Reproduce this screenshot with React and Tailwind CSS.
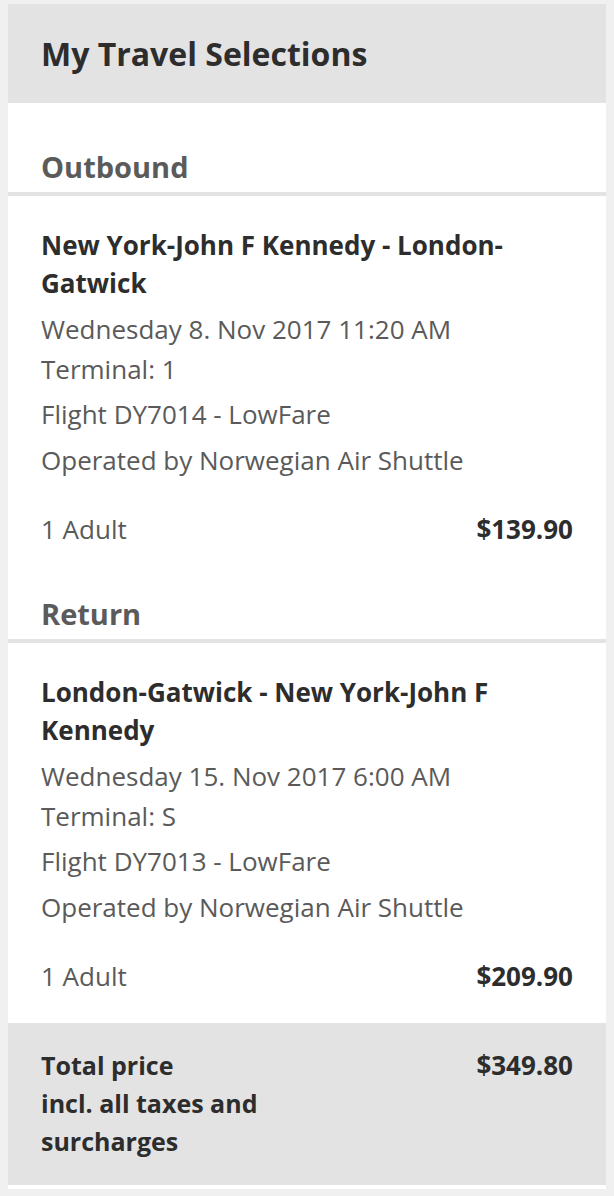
import React from 'react'

const trips = [
    {
        label: 'Outbound',
        route: 'New York-John F Kennedy - London-Gatwick',
        date: 'Wednesday 8. Nov 2017 11:20 AM',
        terminal: 'Terminal: 1',
        flight: 'Flight DY7014 - LowFare',
        price: '$139.90',
    },
    {
        label: 'Return',
        route: 'London-Gatwick - New York-John F Kennedy',
        date: 'Wednesday 15. Nov 2017 6:00 AM',
        terminal: 'Terminal: S',
        flight: 'Flight DY7013 - LowFare',
        price: '$209.90',
    },
]

const TripBlock = ({ trip, first }) => {
    return (
        <div>
            <h3 className={`${first ? 'pt-[47px]' : 'pt-[21px]'} pb-[8px] px-[33px] text-[29px] font-bold leading-[34px] text-[#5b5b5b]`}>
                {trip.label}
            </h3>
            <div className="border-t-4 border-[#e3e3e3] px-[33px] pt-[30px] pb-[27px]">
                <h4 className="text-[26px] font-bold leading-[38px] text-[#2d2d2d]">
                    {trip.route}
                </h4>
                <p className="mt-[7px] text-[26px] leading-[40px] text-[#5a5a5a]">
                    {trip.date}
                    <br />
                    {trip.terminal}
                </p>
                <p className="mt-[5px] text-[26px] leading-[40px] text-[#5a5a5a]">{trip.flight}</p>
                <p className="mt-[6px] text-[26px] leading-[40px] text-[#5a5a5a]">Operated by Norwegian Air Shuttle</p>
                <div className="mt-[29px] flex items-center justify-between text-[26px] leading-[40px]">
                    <span className="text-[#5a5a5a]">1 Adult</span>
                    <span className="font-bold text-[#2d2d2d]">{trip.price}</span>
                </div>
            </div>
        </div>
    )
}

export default function App() {
    return (
        <div className="min-h-[1196px] bg-[#f0f0f0] px-[8px] pt-[4px] font-['Open_Sans',sans-serif]">
            <div className="bg-white">
                <div className="flex h-[99px] items-center bg-[#e3e3e3] px-[33px]">
                    <h2 className="text-[32px] font-bold text-[#2d2d2d]">My Travel Selections</h2>
                </div>
                {trips.map((trip, index) => (
                    <TripBlock key={index} trip={trip} first={index === 0} />
                ))}
                <div className="flex justify-between bg-[#e3e3e3] px-[33px] pt-[23px] pb-[25px] text-[25px] font-bold leading-[38px] text-[#2d2d2d]">
                    <div>
                        Total price
                        <br />
                        incl. all taxes and
                        <br />
                        surcharges
                    </div>
                    <div className="text-[26px]">$349.80</div>
                </div>
                <div className="h-[4px] bg-white" />
            </div>
        </div>
    )
}
